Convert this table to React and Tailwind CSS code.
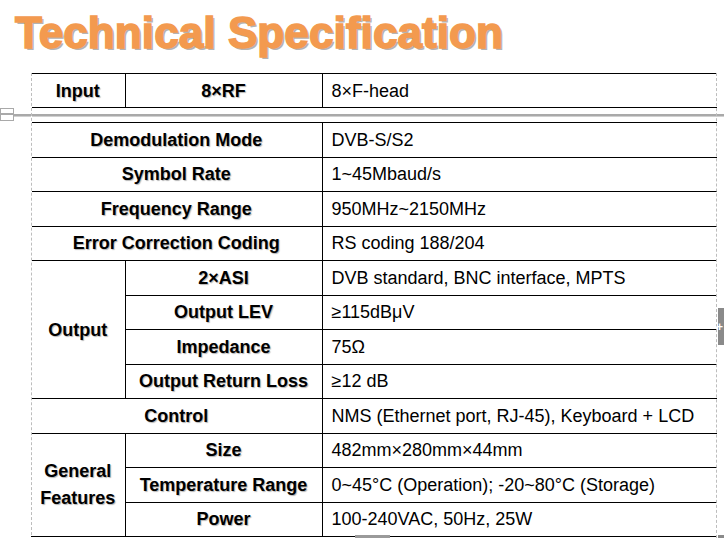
import React from "react";

const font = { fontFamily: '"Liberation Sans", Arial, sans-serif' };

function L({ children, className = "", ...rest }) {
  return (
    <td
      {...rest}
      className={`border-b border-r border-black text-center font-bold text-[18px] leading-[20px] text-black [text-shadow:1px_1px_1px_#b5b5b5] ${className}`}
    >
      {children}
    </td>
  );
}

function Val({ children }) {
  return (
    <td className="border-b border-b-black pl-[9px] text-left text-[18px] leading-[20px] text-black">
      {children}
    </td>
  );
}

function Cols() {
  return (
    <colgroup>
      <col className="w-[94px]" />
      <col className="w-[197px]" />
      <col className="w-[395px]" />
    </colgroup>
  );
}

export default function App() {
  const rows = "h-[34.5px]";
  return (
    <div className="relative w-[724px] h-[538px] overflow-hidden bg-white" style={font}>
      <div className="pl-[15px] pt-[8px] h-[73px]">
        <div className="text-[44px] leading-[50px] font-bold text-[#f39a4f] tracking-[0.1px] [-webkit-text-stroke:1.6px_#f39a4f] [text-shadow:2px_2px_0_#b4b4b4]">
          Technical Specification
        </div>
      </div>

      <div className="pl-[31px]">
        <table className="table-fixed border-collapse w-[686px] border-t border-t-black">
          <Cols />
          <tbody>
            <tr className="h-[34px]">
              <L>Input</L>
              <L>8×RF</L>
              <Val>8×F-head</Val>
            </tr>
          </tbody>
        </table>
      </div>

      <div className="h-[14px] flex flex-col justify-center">
        <div className="h-[2px] bg-[#a9a9a9]" />
        <div className="h-[1px] bg-[#d0d0d0]" />
      </div>

      <div className="pl-[31px]">
        <table className="table-fixed border-collapse w-[686px] border-t border-t-black">
          <Cols />
          <tbody>
            <tr className={rows}>
              <L colSpan={2}>Demodulation Mode</L>
              <Val>DVB-S/S2</Val>
            </tr>
            <tr className={rows}>
              <L colSpan={2}>Symbol Rate</L>
              <Val>1~45Mbaud/s</Val>
            </tr>
            <tr className={rows}>
              <L colSpan={2}>Frequency Range</L>
              <Val>950MHz~2150MHz</Val>
            </tr>
            <tr className={rows}>
              <L colSpan={2}>Error Correction Coding</L>
              <Val>RS coding 188/204</Val>
            </tr>
            <tr className={rows}>
              <L rowSpan={4}>Output</L>
              <L>2×ASI</L>
              <Val>DVB standard, BNC interface, MPTS</Val>
            </tr>
            <tr className={rows}>
              <L>Output LEV</L>
              <Val>≥115dBμV</Val>
            </tr>
            <tr className={rows}>
              <L>Impedance</L>
              <Val>75Ω</Val>
            </tr>
            <tr className={rows}>
              <L>Output Return Loss</L>
              <Val>≥12 dB</Val>
            </tr>
            <tr className={rows}>
              <L colSpan={2}>Control</L>
              <Val>NMS (Ethernet port, RJ-45), Keyboard + LCD</Val>
            </tr>
            <tr className={rows}>
              <L rowSpan={3} className="leading-[27px]">
                General
                <br />
                Features
              </L>
              <L>Size</L>
              <Val>482mm×280mm×44mm</Val>
            </tr>
            <tr className={rows}>
              <L>Temperature Range</L>
              <Val>0~45°C (Operation); -20~80°C (Storage)</Val>
            </tr>
            <tr className={rows}>
              <L>Power</L>
              <Val>100-240VAC, 50Hz, 25W</Val>
            </tr>
          </tbody>
        </table>
      </div>

      {/* dashed outer edges overlay */}
      <div className="absolute left-[31px] top-[73px] h-[462px] border-l border-dashed border-[#bdbdbd] bg-white w-px" />
      <div className="absolute left-[716px] top-[73px] h-[465px] border-l border-dashed border-[#bdbdbd]" />
      {/* small box at left of separator */}
      <div className="absolute left-0 top-[108px] w-[14px] h-[13px] border border-[#a9a9a9] bg-white">
        <div className="mt-[4px] h-[2px] bg-[#a9a9a9]" />
      </div>
      {/* right-side tab */}
      <div className="absolute left-[718px] top-[308px] w-[8px] h-[37px] bg-[#8a8a8a] flex items-center">
        <span className="text-white text-[12px] leading-none font-bold -ml-[2px]">+</span>
      </div>
      {/* bottom bits */}
      <div className="absolute left-[355px] top-[535px] w-[35px] h-[3px] bg-[#9a9a9a]" />
      <div className="absolute left-[718px] top-[535px] w-[6px] h-[3px] bg-[#8a8a8a]" />
    </div>
  );
}
